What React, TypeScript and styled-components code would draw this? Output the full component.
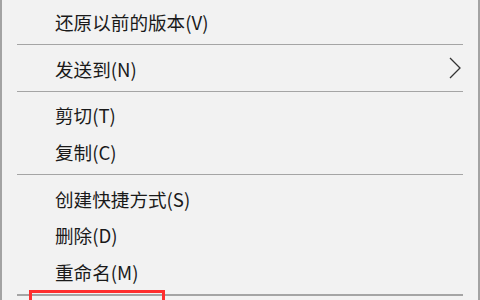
import React from "react";
import styled, { createGlobalStyle } from "styled-components";

const Global = createGlobalStyle`
  html, body { margin: 0; padding: 0; background: #f2f2f2; }
  body { width: 480px; height: 300px; overflow: hidden; }
`;

const Menu = styled.div`
  position: relative;
  box-sizing: border-box;
  width: 480px;
  height: 300px;
  background: #f2f2f2;
  border-left: 2px solid #a3a3a3;
  border-right: 2px solid #a3a3a3;
  padding-top: 3px;
  display: flex;
  flex-direction: column;
  overflow: hidden;
  font-family: "Microsoft YaHei", "Noto Sans CJK SC", sans-serif;
`;

const Item = styled.div`
  height: 37px;
  display: flex;
  align-items: center;
  padding-left: 53px;
  padding-right: 16px;
  font-size: 18.6px;
  color: #1a1a1a;
  position: relative;
`;

const Label = styled.span`
  flex: 1;
  white-space: nowrap;
`;

const Separator = styled.div<{ thick?: boolean }>`
  height: 10px;
  display: flex;
  align-items: center;
  padding-left: 15px;
  padding-right: 15px;
  &::after {
    content: "";
    flex: 1;
    height: ${(p) => (p.thick ? 2 : 1)}px;
    background: #a5a5a5;
  }
`;

const Highlight = styled.div`
  position: absolute;
  left: 27px;
  top: 290px;
  width: 136px;
  height: 20px;
  border: 3px solid #ff2e2e;
  box-sizing: border-box;
`;

const Chevron = () => (
  <svg width="14" height="22" viewBox="0 0 14 22">
    <path d="M2 1 L12 11 L2 21" fill="none" stroke="#333" strokeWidth="1.3" />
  </svg>
);

export default function App() {
  return (
    <>
      <Global />
      <Menu>
        <Item><Label>还原以前的版本(V)</Label></Item>
        <Separator />
        <Item><Label>发送到(N)</Label><Chevron /></Item>
        <Separator />
        <Item><Label>剪切(T)</Label></Item>
        <Item><Label>复制(C)</Label></Item>
        <Separator />
        <Item><Label>创建快捷方式(S)</Label></Item>
        <Item><Label>删除(D)</Label></Item>
        <Item><Label>重命名(M)</Label></Item>
        <Separator thick />
        <Highlight />
      </Menu>
    </>
  );
}
